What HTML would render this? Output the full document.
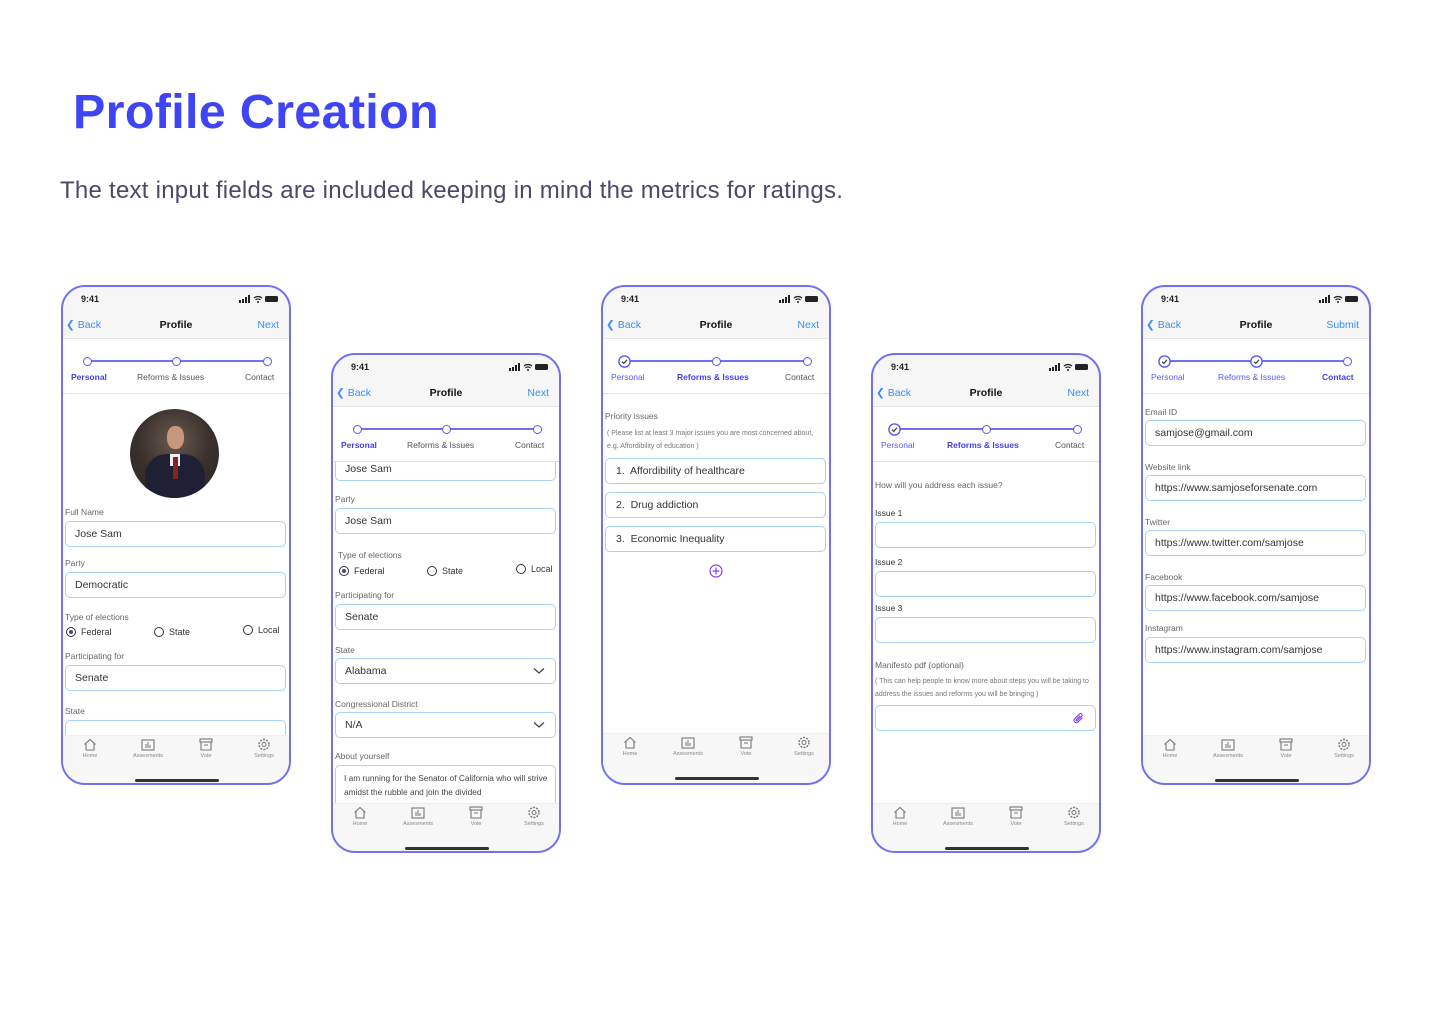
<!DOCTYPE html>
<html><head><meta charset="utf-8"><style>
*{box-sizing:border-box;margin:0;padding:0}
body{width:1440px;height:1024px;background:#fff;font-family:"Liberation Sans",sans-serif;position:relative;overflow:hidden}
h1{position:absolute;left:73px;top:84px;font-size:48.5px;font-weight:bold;color:#3f45f5;letter-spacing:0.3px}
.sub{position:absolute;left:60px;top:177px;font-size:24px;color:#4a4a68;letter-spacing:0.25px}
.ph{position:absolute;width:230px;height:500px;border:2px solid #7070f2;border-radius:24px;overflow:hidden;background:#fff}
.ph *{position:absolute}
.top{left:0;top:0;width:100%;height:52px;background:#f6f6f6;border-bottom:1px solid #e6e6e6}
.tm{left:18px;top:7px;font-size:9px;font-weight:bold;color:#222}
.sig{right:10px;top:8px;width:40px;height:8px}
.back{left:3px;top:32px;font-size:10.5px;color:#3a8ef5}
.title{left:0;width:100%;top:32px;text-align:center;font-size:10.5px;font-weight:bold;color:#111}
.nx{right:10px;top:32px;font-size:10.5px;color:#3a8ef5}
.sep{left:0;top:106px;width:100%;height:1px;background:#e2e2e2}
.line{left:25px;top:73px;width:180px;height:2px;background:#7070f2}
.dot{width:9px;height:9px;border:1.5px solid #5a5af0;border-radius:50%;background:#fff;top:69.5px}
.chk{width:13px;height:13px;top:67.5px}
.sl{top:85px;font-size:8.5px;color:#555;white-space:nowrap}
.sl.a{color:#4040f0;font-weight:bold}
.sl.d{color:#5a5af0}
.lb{left:2px;font-size:8.5px;color:#666}
.in{left:2px;width:221px;height:26px;border:1px solid #a9d2f6;border-radius:5px;font-size:10.5px;color:#333;padding:6px 0 0 9px;background:#fff;white-space:nowrap}
.rad{font-size:9px;color:#333;white-space:nowrap}
.rad i{position:relative;display:inline-block;width:10px;height:10px;border:1.4px solid #333;border-radius:50%;vertical-align:-2px;margin-right:5px}
.rad i.on::after{content:"";position:absolute;left:1.5px;top:1.5px;width:4px;height:4px;border-radius:50%;background:#4a4a6a}
.tab{left:0;top:448px;width:100%;height:50px;background:#f7f7f7;border-top:1px solid #eee}
.tab div{top:2px;width:50px;text-align:center;font-size:5.5px;color:#888}
.tab svg{position:static;display:block;margin:0 auto 2px}
.ph .hb{left:72px;top:492px;width:84px;height:3px;border-radius:2px;background:#333}
.note{left:4px;font-size:7px;color:#777;line-height:13px;width:215px}
.chev{right:10px;top:8px}
</style></head><body>
<h1>Profile Creation</h1>
<div class="sub">The text input fields are included keeping in mind the metrics for ratings.</div>

<!-- PHONE 1 -->
<div class="ph" style="left:61px;top:285px">
<div class="top"></div>
<div class="tm">9:41</div>
<svg class="sig" viewBox="0 0 40 8"><rect x="0" y="5" width="2" height="3" fill="#222"/><rect x="3" y="4" width="2" height="4" fill="#222"/><rect x="6" y="2" width="2" height="6" fill="#222"/><rect x="9" y="0" width="2" height="8" fill="#222"/><path d="M15 3a6 6 0 0 1 8 0M16.5 5a3.5 3.5 0 0 1 5 0" stroke="#222" fill="none" stroke-width="1.2"/><circle cx="19" cy="7" r="1" fill="#222"/><rect x="26" y="1" width="13" height="6" rx="1.5" fill="#222"/></svg>
<div class="back">&#10094; Back</div><div class="title">Profile</div><div class="nx">Next</div>
<div class="line"></div>
<div class="dot" style="left:20px"></div><div class="dot" style="left:109px"></div><div class="dot" style="left:200px"></div>
<div class="sl a" style="left:8px">Personal</div><div class="sl" style="left:74px">Reforms &amp; Issues</div><div class="sl" style="left:182px">Contact</div>
<div class="sep"></div>
<div style="left:67px;top:122px;width:89px;height:89px;border-radius:50%;overflow:hidden;background:radial-gradient(circle at 50% 35%,#6a5a50 0,#3a302c 50%,#2a2628 100%)">
<div style="left:37px;top:17px;width:17px;height:23px;border-radius:45%;background:#c8967c"></div>
<div style="left:15px;top:45px;width:60px;height:50px;border-radius:22px 22px 0 0;background:#1f2033"></div>
<div style="left:40px;top:45px;width:10px;height:12px;background:#eee"></div>
<div style="left:43px;top:48px;width:5px;height:22px;background:#8a1f28"></div>
</div>
<div class="lb" style="top:220px">Full Name</div>
<div class="in" style="top:234px">Jose Sam</div>
<div class="lb" style="top:271px">Party</div>
<div class="in" style="top:285px">Democratic</div>
<div class="lb" style="top:325px">Type of elections</div>
<div class="rad" style="left:3px;top:340px"><i class="on"></i>Federal</div>
<div class="rad" style="left:91px;top:340px"><i></i>State</div>
<div class="rad" style="left:180px;top:338px"><i></i>Local</div>
<div class="lb" style="top:364px">Participating for</div>
<div class="in" style="top:378px">Senate</div>
<div class="lb" style="top:419px">State</div>
<div class="in" style="top:433px"></div>
<div class="tab">
<div style="left:2px"><svg width="14" height="13" viewBox="0 0 14 13"><path d="M1.5 6.5 7 1.5l5.5 5M3 5.5V12h8V5.5" fill="none" stroke="#777" stroke-width="1.1"/></svg>Home</div>
<div style="left:60px"><svg width="14" height="13" viewBox="0 0 14 13"><rect x="1" y="2" width="12" height="10" fill="none" stroke="#777" stroke-width="1.1"/><path d="M5 10V6M7 10V4M9 10V7" stroke="#777"/></svg>Assesments</div>
<div style="left:118px"><svg width="14" height="13" viewBox="0 0 14 13"><rect x="1" y="1" width="12" height="3" fill="none" stroke="#777" stroke-width="1.1"/><path d="M2 4v8h10V4M5 7h4" fill="none" stroke="#777" stroke-width="1.1"/></svg>Vote</div>
<div style="left:176px"><svg width="14" height="13" viewBox="0 0 14 13"><circle cx="7" cy="6.5" r="2" fill="none" stroke="#777"/><circle cx="7" cy="6.5" r="5" fill="none" stroke="#777" stroke-dasharray="2 1.2" stroke-width="1.4"/></svg>Settings</div>
</div>
<div class="hb"></div>
</div>

<!-- PHONE 2 -->
<div class="ph" style="left:331px;top:353px">
<div class="in" style="top:98px;height:28px;padding-top:9px">Jose Sam</div>
<div class="top"></div>
<div style="left:0;top:53px;width:100%;height:53px;background:#fff"></div>
<div class="tm">9:41</div>
<svg class="sig" viewBox="0 0 40 8"><rect x="0" y="5" width="2" height="3" fill="#222"/><rect x="3" y="4" width="2" height="4" fill="#222"/><rect x="6" y="2" width="2" height="6" fill="#222"/><rect x="9" y="0" width="2" height="8" fill="#222"/><path d="M15 3a6 6 0 0 1 8 0M16.5 5a3.5 3.5 0 0 1 5 0" stroke="#222" fill="none" stroke-width="1.2"/><circle cx="19" cy="7" r="1" fill="#222"/><rect x="26" y="1" width="13" height="6" rx="1.5" fill="#222"/></svg>
<div class="back">&#10094; Back</div><div class="title">Profile</div><div class="nx">Next</div>
<div class="line"></div>
<div class="dot" style="left:20px"></div><div class="dot" style="left:109px"></div><div class="dot" style="left:200px"></div>
<div class="sl a" style="left:8px">Personal</div><div class="sl" style="left:74px">Reforms &amp; Issues</div><div class="sl" style="left:182px">Contact</div>
<div class="sep"></div>
<div class="lb" style="top:139px">Party</div>
<div class="in" style="top:153px">Jose Sam</div>
<div class="lb" style="top:195px;left:5px">Type of elections</div>
<div class="rad" style="left:6px;top:211px"><i class="on"></i>Federal</div>
<div class="rad" style="left:94px;top:211px"><i></i>State</div>
<div class="rad" style="left:183px;top:209px"><i></i>Local</div>
<div class="lb" style="top:235px">Participating for</div>
<div class="in" style="top:249px">Senate</div>
<div class="lb" style="top:290px">State</div>
<div class="in" style="top:303px">Alabama<svg class="chev" width="12" height="8" viewBox="0 0 12 8"><path d="M1 1.5 6 6l5-4.5" fill="none" stroke="#444" stroke-width="1.3"/></svg></div>
<div class="lb" style="top:344px">Congressional District</div>
<div class="in" style="top:357px">N/A<svg class="chev" width="12" height="8" viewBox="0 0 12 8"><path d="M1 1.5 6 6l5-4.5" fill="none" stroke="#444" stroke-width="1.3"/></svg></div>
<div class="lb" style="top:396px">About yourself</div>
<div class="in" style="top:410px;height:60px;font-size:8.3px;line-height:14px;padding:5px 4px 0 8px;white-space:normal;color:#444">I am running for the Senator of California who will strive amidst the rubble and join the divided</div>
<div class="tab">
<div style="left:2px"><svg width="14" height="13" viewBox="0 0 14 13"><path d="M1.5 6.5 7 1.5l5.5 5M3 5.5V12h8V5.5" fill="none" stroke="#777" stroke-width="1.1"/></svg>Home</div>
<div style="left:60px"><svg width="14" height="13" viewBox="0 0 14 13"><rect x="1" y="2" width="12" height="10" fill="none" stroke="#777" stroke-width="1.1"/><path d="M5 10V6M7 10V4M9 10V7" stroke="#777"/></svg>Assesments</div>
<div style="left:118px"><svg width="14" height="13" viewBox="0 0 14 13"><rect x="1" y="1" width="12" height="3" fill="none" stroke="#777" stroke-width="1.1"/><path d="M2 4v8h10V4M5 7h4" fill="none" stroke="#777" stroke-width="1.1"/></svg>Vote</div>
<div style="left:176px"><svg width="14" height="13" viewBox="0 0 14 13"><circle cx="7" cy="6.5" r="2" fill="none" stroke="#777"/><circle cx="7" cy="6.5" r="5" fill="none" stroke="#777" stroke-dasharray="2 1.2" stroke-width="1.4"/></svg>Settings</div>
</div>
<div class="hb"></div>
</div>

<!-- PHONE 3 -->
<div class="ph" style="left:601px;top:285px">
<div class="top"></div>
<div class="tm">9:41</div>
<svg class="sig" viewBox="0 0 40 8"><rect x="0" y="5" width="2" height="3" fill="#222"/><rect x="3" y="4" width="2" height="4" fill="#222"/><rect x="6" y="2" width="2" height="6" fill="#222"/><rect x="9" y="0" width="2" height="8" fill="#222"/><path d="M15 3a6 6 0 0 1 8 0M16.5 5a3.5 3.5 0 0 1 5 0" stroke="#222" fill="none" stroke-width="1.2"/><circle cx="19" cy="7" r="1" fill="#222"/><rect x="26" y="1" width="13" height="6" rx="1.5" fill="#222"/></svg>
<div class="back">&#10094; Back</div><div class="title">Profile</div><div class="nx">Next</div>
<div class="line" style="left:22px"></div>
<svg class="chk" style="left:15px" viewBox="0 0 13 13"><circle cx="6.5" cy="6.5" r="5.6" fill="#fff" stroke="#5a5af0" stroke-width="1.4"/><path d="M4 6.7 5.8 8.4 9 4.8" fill="none" stroke="#333" stroke-width="1.1"/></svg>
<div class="dot" style="left:109px"></div><div class="dot" style="left:200px"></div>
<div class="sl d" style="left:8px">Personal</div><div class="sl a" style="left:74px">Reforms &amp; Issues</div><div class="sl" style="left:182px">Contact</div>
<div class="sep"></div>
<div class="lb" style="top:124px">Priority issues</div>
<div class="note" style="top:140px">( Please list at least 3 major issues you are most concerned about, e.g. Affordibility of education )</div>
<div class="in" style="top:171px;padding-left:10px">1.&nbsp; Affordibility of healthcare</div>
<div class="in" style="top:205px;padding-left:10px">2.&nbsp; Drug addiction</div>
<div class="in" style="top:239px;padding-left:10px">3.&nbsp; Economic Inequality</div>
<svg style="left:106px;top:277px" width="14" height="14" viewBox="0 0 14 14"><circle cx="7" cy="7" r="6" fill="none" stroke="#8a3cf0" stroke-width="1.2"/><path d="M7 3.5v7M3.5 7h7" stroke="#8a3cf0" stroke-width="1.2"/></svg>
<div class="tab" style="top:446px">
<div style="left:2px"><svg width="14" height="13" viewBox="0 0 14 13"><path d="M1.5 6.5 7 1.5l5.5 5M3 5.5V12h8V5.5" fill="none" stroke="#777" stroke-width="1.1"/></svg>Home</div>
<div style="left:60px"><svg width="14" height="13" viewBox="0 0 14 13"><rect x="1" y="2" width="12" height="10" fill="none" stroke="#777" stroke-width="1.1"/><path d="M5 10V6M7 10V4M9 10V7" stroke="#777"/></svg>Assesments</div>
<div style="left:118px"><svg width="14" height="13" viewBox="0 0 14 13"><rect x="1" y="1" width="12" height="3" fill="none" stroke="#777" stroke-width="1.1"/><path d="M2 4v8h10V4M5 7h4" fill="none" stroke="#777" stroke-width="1.1"/></svg>Vote</div>
<div style="left:176px"><svg width="14" height="13" viewBox="0 0 14 13"><circle cx="7" cy="6.5" r="2" fill="none" stroke="#777"/><circle cx="7" cy="6.5" r="5" fill="none" stroke="#777" stroke-dasharray="2 1.2" stroke-width="1.4"/></svg>Settings</div>
</div>
<div class="hb" style="top:490px"></div>
</div>

<!-- PHONE 4 -->
<div class="ph" style="left:871px;top:353px">
<div class="top"></div>
<div class="tm">9:41</div>
<svg class="sig" viewBox="0 0 40 8"><rect x="0" y="5" width="2" height="3" fill="#222"/><rect x="3" y="4" width="2" height="4" fill="#222"/><rect x="6" y="2" width="2" height="6" fill="#222"/><rect x="9" y="0" width="2" height="8" fill="#222"/><path d="M15 3a6 6 0 0 1 8 0M16.5 5a3.5 3.5 0 0 1 5 0" stroke="#222" fill="none" stroke-width="1.2"/><circle cx="19" cy="7" r="1" fill="#222"/><rect x="26" y="1" width="13" height="6" rx="1.5" fill="#222"/></svg>
<div class="back">&#10094; Back</div><div class="title">Profile</div><div class="nx">Next</div>
<div class="line" style="left:22px"></div>
<svg class="chk" style="left:15px" viewBox="0 0 13 13"><circle cx="6.5" cy="6.5" r="5.6" fill="#fff" stroke="#5a5af0" stroke-width="1.4"/><path d="M4 6.7 5.8 8.4 9 4.8" fill="none" stroke="#333" stroke-width="1.1"/></svg>
<div class="dot" style="left:109px"></div><div class="dot" style="left:200px"></div>
<div class="sl d" style="left:8px">Personal</div><div class="sl a" style="left:74px">Reforms &amp; Issues</div><div class="sl" style="left:182px">Contact</div>
<div class="sep"></div>
<div class="lb" style="top:125px">How will you address each issue?</div>
<div class="lb" style="top:153px;color:#333">Issue 1</div>
<div class="in" style="top:167px"></div>
<div class="lb" style="top:202px;color:#333">Issue 2</div>
<div class="in" style="top:216px"></div>
<div class="lb" style="top:248px;color:#333">Issue 3</div>
<div class="in" style="top:262px"></div>
<div class="lb" style="top:305px">Manifesto pdf (optional)</div>
<div class="note" style="top:320px;left:2px;width:225px">( This can help people to know more about steps you will be taking to address the issues and reforms you will be bringing )</div>
<div class="in" style="top:350px"><svg style="right:10px;top:6px" width="12" height="13" viewBox="0 0 12 13"><path d="M9.5 5.5 5 10a2.3 2.3 0 0 1-3.3-3.3L6.5 2a1.5 1.5 0 0 1 2.2 2.2L4.2 8.6a.7.7 0 0 1-1-1L7 3.8" fill="none" stroke="#8a3cf0" stroke-width="1.1"/></svg></div>
<div class="tab">
<div style="left:2px"><svg width="14" height="13" viewBox="0 0 14 13"><path d="M1.5 6.5 7 1.5l5.5 5M3 5.5V12h8V5.5" fill="none" stroke="#777" stroke-width="1.1"/></svg>Home</div>
<div style="left:60px"><svg width="14" height="13" viewBox="0 0 14 13"><rect x="1" y="2" width="12" height="10" fill="none" stroke="#777" stroke-width="1.1"/><path d="M5 10V6M7 10V4M9 10V7" stroke="#777"/></svg>Assesments</div>
<div style="left:118px"><svg width="14" height="13" viewBox="0 0 14 13"><rect x="1" y="1" width="12" height="3" fill="none" stroke="#777" stroke-width="1.1"/><path d="M2 4v8h10V4M5 7h4" fill="none" stroke="#777" stroke-width="1.1"/></svg>Vote</div>
<div style="left:176px"><svg width="14" height="13" viewBox="0 0 14 13"><circle cx="7" cy="6.5" r="2" fill="none" stroke="#777"/><circle cx="7" cy="6.5" r="5" fill="none" stroke="#777" stroke-dasharray="2 1.2" stroke-width="1.4"/></svg>Settings</div>
</div>
<div class="hb"></div>
</div>

<!-- PHONE 5 -->
<div class="ph" style="left:1141px;top:285px">
<div class="top"></div>
<div class="tm">9:41</div>
<svg class="sig" viewBox="0 0 40 8"><rect x="0" y="5" width="2" height="3" fill="#222"/><rect x="3" y="4" width="2" height="4" fill="#222"/><rect x="6" y="2" width="2" height="6" fill="#222"/><rect x="9" y="0" width="2" height="8" fill="#222"/><path d="M15 3a6 6 0 0 1 8 0M16.5 5a3.5 3.5 0 0 1 5 0" stroke="#222" fill="none" stroke-width="1.2"/><circle cx="19" cy="7" r="1" fill="#222"/><rect x="26" y="1" width="13" height="6" rx="1.5" fill="#222"/></svg>
<div class="back">&#10094; Back</div><div class="title">Profile</div><div class="nx">Submit</div>
<div class="line" style="left:22px"></div>
<svg class="chk" style="left:15px" viewBox="0 0 13 13"><circle cx="6.5" cy="6.5" r="5.6" fill="#fff" stroke="#5a5af0" stroke-width="1.4"/><path d="M4 6.7 5.8 8.4 9 4.8" fill="none" stroke="#333" stroke-width="1.1"/></svg>
<svg class="chk" style="left:107px" viewBox="0 0 13 13"><circle cx="6.5" cy="6.5" r="5.6" fill="#fff" stroke="#5a5af0" stroke-width="1.4"/><path d="M4 6.7 5.8 8.4 9 4.8" fill="none" stroke="#333" stroke-width="1.1"/></svg>
<div class="dot" style="left:200px"></div>
<div class="sl d" style="left:8px">Personal</div><div class="sl d" style="left:75px">Reforms &amp; Issues</div><div class="sl a" style="left:179px">Contact</div>
<div class="sep"></div>
<div class="lb" style="top:120px">Email ID</div>
<div class="in" style="top:133px">samjose@gmail.com</div>
<div class="lb" style="top:175px">Website link</div>
<div class="in" style="top:188px">https://www.samjoseforsenate.com</div>
<div class="lb" style="top:230px">Twitter</div>
<div class="in" style="top:243px">https://www.twitter.com/samjose</div>
<div class="lb" style="top:285px">Facebook</div>
<div class="in" style="top:298px">https://www.facebook.com/samjose</div>
<div class="lb" style="top:336px">Instagram</div>
<div class="in" style="top:350px">https://www.instagram.com/samjose</div>
<div class="tab">
<div style="left:2px"><svg width="14" height="13" viewBox="0 0 14 13"><path d="M1.5 6.5 7 1.5l5.5 5M3 5.5V12h8V5.5" fill="none" stroke="#777" stroke-width="1.1"/></svg>Home</div>
<div style="left:60px"><svg width="14" height="13" viewBox="0 0 14 13"><rect x="1" y="2" width="12" height="10" fill="none" stroke="#777" stroke-width="1.1"/><path d="M5 10V6M7 10V4M9 10V7" stroke="#777"/></svg>Assesments</div>
<div style="left:118px"><svg width="14" height="13" viewBox="0 0 14 13"><rect x="1" y="1" width="12" height="3" fill="none" stroke="#777" stroke-width="1.1"/><path d="M2 4v8h10V4M5 7h4" fill="none" stroke="#777" stroke-width="1.1"/></svg>Vote</div>
<div style="left:176px"><svg width="14" height="13" viewBox="0 0 14 13"><circle cx="7" cy="6.5" r="2" fill="none" stroke="#777"/><circle cx="7" cy="6.5" r="5" fill="none" stroke="#777" stroke-dasharray="2 1.2" stroke-width="1.4"/></svg>Settings</div>
</div>
<div class="hb"></div>
</div>
</body></html>
